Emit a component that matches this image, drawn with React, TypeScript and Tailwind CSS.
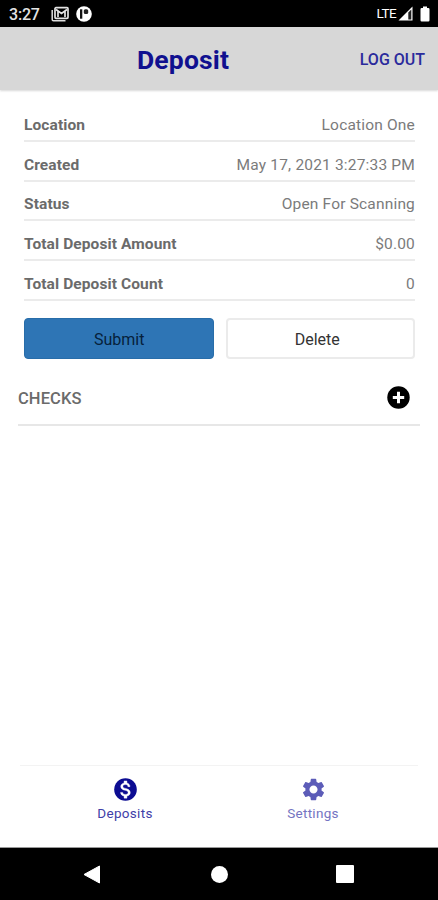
import { MdSettings } from "react-icons/md";

const details = [
  { label: "Location", value: "Location One" },
  { label: "Created", value: "May 17, 2021 3:27:33 PM" },
  { label: "Status", value: "Open For Scanning" },
  { label: "Total Deposit Amount", value: "$0.00" },
  { label: "Total Deposit Count", value: "0" },
];

function StatusBar() {
  return (
    <div className="flex h-[27px] items-center bg-black pl-[9px] pr-[8px] text-white">
      <span className="w-[42px] pt-[2px] text-[16px] font-medium leading-none tracking-[-0.2px] text-[#e4e4e4]">3:27</span>
      <svg className="h-[16px] w-[18px]" viewBox="0 0 18 16" fill="none">
        <rect x="4" y="1.7" width="13" height="10.6" rx="1" stroke="#e4e4e4" strokeWidth="1.7" />
        <path d="M1.2 4v9.500q0 1.300 1.300 1.300H14.500" stroke="#ddd" strokeWidth="1.500" />
        <path d="M5 3.500l5.500 4L16 3.500M7 11V5M14 11V5" stroke="#e4e4e4" strokeWidth="1.700" />
      </svg>
      <svg className="ml-[7px] h-[16px] w-[16px]" viewBox="0 0 16 16">
        <circle cx="8" cy="8" r="7.800" fill="#fff" />
        <path d="M4 3.300h2.300v9.400H4z" fill="#111" />
        <rect x="7.800" y="3.300" width="4.400" height="4.800" rx="1.500" fill="#222" />
      </svg>
      <span className="ml-auto pt-[1px] text-[13.500px] leading-none tracking-[-0.6px]">LTE</span>
      <svg className="ml-[2px] h-[15px] w-[15px]" viewBox="0 0 15 15">
        <path d="M.5 14.500 14.500.500v14z" fill="#fff" />
        <path d="M10.300 6.500 13.300 3.500v10h-3z" fill="#222" />
      </svg>
      <svg className="ml-[7px] h-[16px] w-[10px]" viewBox="0 0 10 16">
        <path d="M3 .500h4V2h1.300Q9.500 2 9.500 3.300v11q0 1.200-1.200 1.200H1.700Q.500 15.500.500 14.300v-11Q.500 2 1.700 2H3z" fill="#fff" />
      </svg>
    </div>
  );
}

function DollarIcon() {
  return (
    <svg className="my-[2px] size-[23px]" viewBox="0 0 24 24">
      <circle cx="12" cy="12" r="11.800" fill="#0c0c92" />
      <path
        transform="translate(.5 0)"
        fill="#fff"
        stroke="#fff"
        strokeWidth=".4"
        d="M11.8 10.9c-2.27-.59-3-1.2-3-2.15 0-1.09 1.01-1.85 2.7-1.85 1.78 0 2.44.85 2.5 2.1h2.21c-.07-1.72-1.12-3.3-3.21-3.81V3h-3v2.16c-1.94.42-3.5 1.68-3.5 3.61 0 2.31 1.91 3.46 4.7 4.13 2.5.6 3 1.48 3 2.41 0 .69-.49 1.79-2.7 1.79-2.06 0-2.87-.92-2.98-2.1h-2.2c.12 2.19 1.76 3.42 3.68 3.83V21h3v-2.15c1.95-.37 3.5-1.5 3.5-3.55 0-2.84-2.43-3.81-4.7-4.4z"
      />
    </svg>
  );
}

export default function App() {
  return (
    <div className="flex h-[900px] w-[438px] flex-col overflow-hidden bg-white font-[Roboto,sans-serif]">
      <StatusBar />
      <header className="grid h-[63px] shrink-0 grid-cols-[137px_1fr_auto] items-center bg-[#d7d7d7] pr-[13px] text-[#10108f] shadow-[0_1px_2px_#00000028]">
        <h1 className="col-start-2 pt-[3px] text-[26.500px] font-bold leading-none tracking-[0.15px]">Deposit</h1>
        <button className="pt-[2px] text-[16px] font-medium leading-none text-[#2a2a9c]">LOG OUT</button>
      </header>

      <main className="flex grow flex-col px-[18px] pt-[12px]">
        <dl className="pl-[6px] pr-[5px] text-[15.500px] tracking-[0.180px] text-[#7b7b7b]">
          {details.map((item) => (
            <div key={item.label} className="flex h-[39.800px] items-center justify-between border-b-2 border-[#ebebeb] pt-[9px]">
              <dt className="font-bold tracking-[0.1px] text-[#6b6b6b]">{item.label}</dt>
              <dd>{item.value}</dd>
            </div>
          ))}
        </dl>
        <div className="mt-[17px] grid grid-cols-2 gap-[12px] pl-[6px] pr-[5px] text-[16px]">
          <button className="h-[41px] rounded-[4px] border border-[#286da9] bg-[#2e75b5] pl-[1px] pt-[3px] text-[#06213b]">Submit</button>
          <button className="h-[41px] rounded-[4px] border-2 border-[#ebebeb] bg-white pr-[6px] pt-[3px] text-[#333]">Delete</button>
        </div>
        <div className="flex h-[67px] items-center justify-between border-b-2 border-[#e7e7e7] pr-[10px] pt-[13px]">
          <h2 className="pt-[2px] text-[16.500px] font-medium tracking-[0.1px] text-[#6b6b6b]">CHECKS</h2>
          <svg className="size-[23px]" viewBox="0 0 23 23">
            <circle cx="11.500" cy="11.500" r="11.200" />
            <path d="M11.500 5.800v11.400M5.800 11.500h11.400" stroke="#fff" strokeWidth="3" />
          </svg>
        </div>
      </main>

      <nav className="mx-[20px] flex h-[82px] shrink-0 border-t border-[#f3f3f3] text-[13.500px] leading-none tracking-[0.3px]">
        <a className="flex w-[210px] flex-col items-center pt-[10px]">
          <DollarIcon />
          <span className="mt-[4px] text-[#4040a8]">Deposits</span>
        </a>
        <a className="flex w-[166px] flex-col items-center pt-[10px] text-[#5c5cb8]">
          <MdSettings className="size-[27px]" />
          <span className="mt-[4px] text-[#7474c2]">Settings</span>
        </a>
      </nav>
      <footer className="flex h-[53px] shrink-0 items-center justify-between border-t border-[#999] bg-black pl-[83px] pr-[84px]">
        <svg className="h-[19px] w-[18px]" viewBox="0 0 18 19">
          <path d="M1 9.500 16.500 1v17z" fill="#fff" stroke="#fff" strokeLinejoin="round" />
        </svg>
        <span className="ml-[2px] size-[17px] rounded-full bg-white" />
        <span className="size-[18px] rounded-[1px] bg-white" />
      </footer>
    </div>
  );
}
